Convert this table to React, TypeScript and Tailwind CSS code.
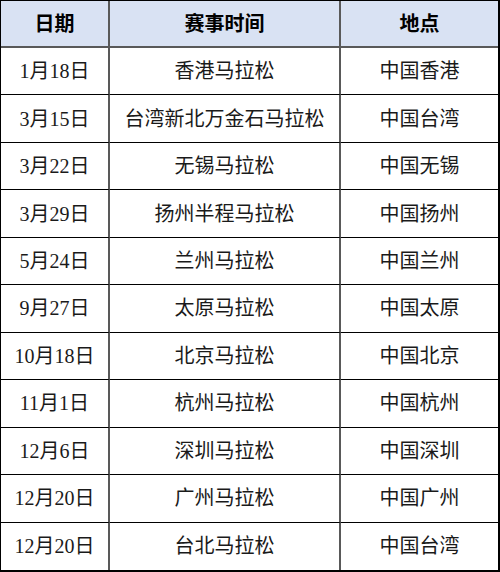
const rows: [string, string, string][] = [
  ['1月18日', '香港马拉松', '中国香港'],
  ['3月15日', '台湾新北万金石马拉松', '中国台湾'],
  ['3月22日', '无锡马拉松', '中国无锡'],
  ['3月29日', '扬州半程马拉松', '中国扬州'],
  ['5月24日', '兰州马拉松', '中国兰州'],
  ['9月27日', '太原马拉松', '中国太原'],
  ['10月18日', '北京马拉松', '中国北京'],
  ['11月1日', '杭州马拉松', '中国杭州'],
  ['12月6日', '深圳马拉松', '中国深圳'],
  ['12月20日', '广州马拉松', '中国广州'],
  ['12月20日', '台北马拉松', '中国台湾'],
];

export default function App() {
  return (
    <div
      className="w-[500px] h-[572px] bg-white text-[20px] text-[#1a1a1a] border-t border-l border-r-2 border-b-2 border-black grid grid-cols-[109px_231px_1fr] grid-rows-[47px_repeat(11,1fr)]"
      style={{ fontFamily: '"Liberation Serif", "Noto Sans CJK SC", serif' }}
    >
      {['日期', '赛事时间', '地点'].map((h, i) => (
        <div
          key={h}
          className={`flex items-center justify-center bg-[#d9e2f3] font-bold text-black border-b-2 border-[#595959] ${
            i < 2 ? 'border-r-2' : ''
          }`}
        >
          {h}
        </div>
      ))}
      {rows.map((r, ri) =>
        r.map((c, ci) => (
          <div
            key={`${ri}-${ci}`}
            className={`flex items-center justify-center ${ri < rows.length - 1 ? 'border-b border-black' : ''} ${
              ci < 2 ? 'border-r-2 border-r-[#595959]' : ''
            }`}
          >
            {c}
          </div>
        )),
      )}
    </div>
  );
}
